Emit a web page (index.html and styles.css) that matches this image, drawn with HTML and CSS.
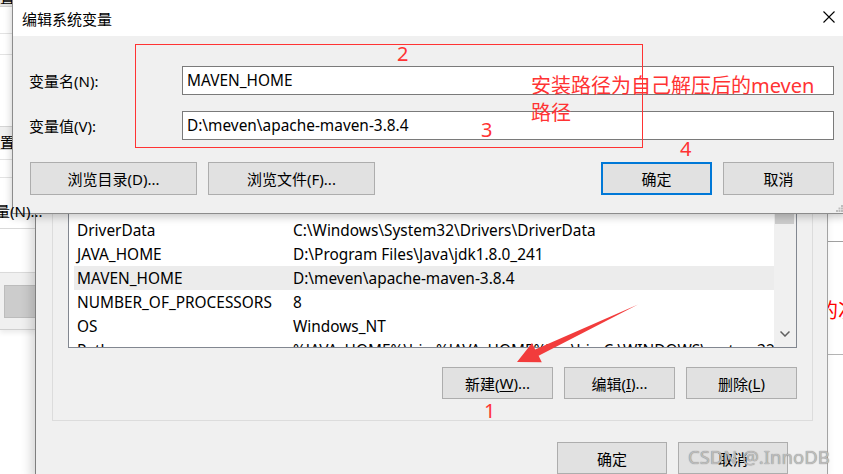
FILE: index.html
```html
<!DOCTYPE html>
<html lang="zh-CN">
<head>
<meta charset="utf-8">
<title>编辑系统变量</title>
<link rel="stylesheet" href="styles.css">
</head>
<body>
<div class="screen">

  <div class="bg-left">
    <div class="bl-head"><span>置</span></div>
    <div class="bl-l1"></div>
    <div class="bl-l2"></div>
    <div class="bl-sp1"></div>
    <div class="bl-band"><span>置</span></div>
    <div class="bl-l3"></div>
    <div class="bl-l4"></div>
    <div class="bl-sp2"></div>
    <div class="bl-sp3"></div>
    <div class="bl-toolbar"><div class="bl-btn"></div></div>
  </div>

  <div class="bg-right">
    <div class="br-top"></div>
    <div class="br-mid"><span class="br-red">的次</span></div>
  </div>

  <div class="envwin">
    <div class="group">
      <div class="list">
        <div class="rows">
          <div class="row head"></div>
          <div class="row"></div>
          <div class="row"><span class="k">DriverData</span><span class="v">C:\Windows\System32\Drivers\DriverData</span></div>
          <div class="row"><span class="k">JAVA_HOME</span><span class="v">D:\Program Files\Java\jdk1.8.0_241</span></div>
          <div class="row sel"><span class="k">MAVEN_HOME</span><span class="v">D:\meven\apache-maven-3.8.4</span></div>
          <div class="row"><span class="k">NUMBER_OF_PROCESSORS</span><span class="v">8</span></div>
          <div class="row"><span class="k">OS</span><span class="v">Windows_NT</span></div>
          <div class="row"><span class="k">Path</span><span class="v">%JAVA_HOME%\bin;%JAVA_HOME%\jre\bin;C:\WINDOWS\system32;C:\WINDOWS</span></div>
        </div>
        <div class="scroll">
          <div class="thumb"></div>
          <svg class="chev" width="10" height="6" viewBox="0 0 10 6"><polyline points="0.5,0.5 5,5 9.5,0.5" fill="none" stroke="#606060" stroke-width="1.5"/></svg>
        </div>
      </div>
      <div class="gbtns">
        <div class="btn w111">新建(<u>W</u>)...</div>
        <div class="btn w111">编辑(<u>I</u>)...</div>
        <div class="btn w111">删除(<u>L</u>)</div>
      </div>
    </div>
    <div class="wbtns">
      <div class="btn w110">确定</div>
      <div class="btn w110">取消</div>
    </div>
  </div>

  <div class="dlg">
    <div class="dlg-title">
      <span>编辑系统变量</span>
      <svg class="close" width="12" height="12" viewBox="0 0 12 12"><path d="M0.5 0.5 L11.5 11.5 M11.5 0.5 L0.5 11.5" stroke="#000" stroke-width="1.1" fill="none"/></svg>
    </div>
    <div class="dlg-body">
      <div class="field">
        <label class="lbl">变量名(N):</label>
        <div class="input">MAVEN_HOME</div>
      </div>
      <div class="field">
        <label class="lbl">变量值(V):</label>
        <div class="input">D:\meven\apache-maven-3.8.4</div>
      </div>
      <div class="dbtns">
        <div class="btn w167">浏览目录(D)...</div>
        <div class="btn w167">浏览文件(F)...</div>
        <div class="spacer"></div>
        <div class="btn w111 primary">确定</div>
        <div class="btn w111">取消</div>
      </div>
    </div>
    <svg class="grip" width="7" height="7" viewBox="0 0 7 7">
      <rect x="5" y="0" width="2" height="2" fill="#bdbdbd"/>
      <rect x="2.5" y="2.5" width="2" height="2" fill="#bdbdbd"/>
      <rect x="5" y="2.5" width="2" height="2" fill="#bdbdbd"/>
      <rect x="0" y="5" width="2" height="2" fill="#bdbdbd"/>
      <rect x="2.5" y="5" width="2" height="2" fill="#bdbdbd"/>
      <rect x="5" y="5" width="2" height="2" fill="#bdbdbd"/>
    </svg>
  </div>

  <div class="stray">量(N)...</div>

  <div class="redbox"></div>
  <div class="note">安装路径为自己解压后的meven<br>路径</div>
  <div class="num n2">2</div>
  <div class="num n3">3</div>
  <div class="num n4">4</div>
  <div class="num n1">1</div>

  <svg class="arrow" width="843" height="474" viewBox="0 0 843 474">
    <polygon points="638,304.5 538.6,355.8 541.8,362.3 517,362 532,343 535.2,349.6" fill="#f23c3c"/>
  </svg>

  <div class="wm">CSDN @.InnoDB</div>
</div>
</body>
</html>
```

FILE: styles.css
```css
body {
  margin: 0;
}

.screen {
  position: relative;
  width: 843px;
  height: 474px;
  overflow: hidden;
  background: #fff;
  font-family: "Noto Sans", "Noto Sans CJK SC", sans-serif;
  font-size: 15px;
  color: #000;
}

/* ---------- left background window ---------- */
.bg-left {
  position: absolute;
  left: 0;
  top: 0;
  width: 36px;
  height: 474px;
  background: #fff;
  display: flex;
  flex-direction: column;
  overflow: hidden;
  z-index: 1;
}
.bl-head {
  height: 6px;
  flex: none;
  background: #e6e6e6;
  border-bottom: 1px solid #cfcfcf;
  overflow: hidden;
}
.bl-head span {
  display: block;
  margin-top: -10px;
  line-height: 15px;
}
.bl-l1 { height: 26px; flex: none; border-bottom: 1px solid #e3e3e3; }
.bl-l2 { height: 20px; flex: none; border-bottom: 1px solid #e3e3e3; }
.bl-sp1 { height: 71px; flex: none; }
.bl-band {
  height: 22px;
  flex: none;
  background: #f0f0f0;
  border-top: 1px solid #d5d5d5;
  border-bottom: 1px solid #d5d5d5;
  overflow: hidden;
}
.bl-band span {
  display: block;
  padding-top: 8px;
  line-height: 15px;
}
.bl-l3 { height: 9px; flex: none; border-bottom: 1px solid #e3e3e3; }
.bl-l4 { height: 17px; flex: none; border-bottom: 1px solid #e3e3e3; }
.bl-sp2 { height: 50px; flex: none; border-bottom: 1px solid #d9d9d9; }
.bl-sp3 { height: 43px; flex: none; }
.bl-toolbar {
  height: 44px;
  flex: none;
  background: #f0f0f0;
  border-top: 1px solid #dadada;
  border-bottom: 1px solid #cfcfcf;
  padding: 12px 0 0 4px;
  box-shadow: 0 3px 5px rgba(0, 0, 0, 0.08);
}
.bl-btn {
  width: 40px;
  height: 31px;
  background: #cccccc;
  border: 1px solid #bcbcbc;
}

/* ---------- right background window ---------- */
.bg-right {
  position: absolute;
  left: 826px;
  top: 0;
  width: 17px;
  height: 474px;
  background: #fff;
  z-index: 1;
}
.br-top {
  height: 241px;
  border-bottom: 1px solid #a0a0a0;
}
.br-mid {
  height: 113px;
  border-bottom: 1px solid #b4b4b4;
  padding-top: 59px;
  box-sizing: border-box;
  white-space: nowrap;
}
.br-red {
  display: block;
  margin-left: -8px;
  font-size: 20px;
  line-height: 20px;
  color: #f00;
}

/* ---------- environment variables window ---------- */
.envwin {
  position: absolute;
  left: 35px;
  top: 100px;
  width: 793px;
  height: 380px;
  box-sizing: border-box;
  background: #f0f0f0;
  border-left: 1px solid #7f7f7f;
  border-right: 1px solid #a3a3a3;
  padding: 40px 14px 0 16px;
  box-shadow: -4px 0 10px rgba(0, 0, 0, 0.16);
  z-index: 2;
}
.group {
  border: 1px solid #dcdcdc;
  padding: 28px 15px 21px 15px;
}
.list {
  height: 179px;
  box-sizing: border-box;
  border: 1px solid #828790;
  background: #fff;
  display: flex;
  font-size: 15.4px;
}
.rows {
  flex: 1;
  overflow: hidden;
  min-width: 0;
}
.row {
  display: flex;
  height: 24px;
  align-items: center;
  margin-left: 5px;
  padding-left: 3px;
  white-space: nowrap;
}
.row.sel {
  background: #ececec;
}
.row .k {
  width: 216px;
  flex: none;
}
.scroll {
  width: 22px;
  flex: none;
  background: #f0f0f0;
  display: flex;
  flex-direction: column;
  justify-content: space-between;
  align-items: center;
}
.thumb {
  align-self: stretch;
  margin: 30px 2px 0 1px;
  height: 24px;
  background: #cdcdcd;
}
.chev {
  margin-bottom: 10px;
}

.gbtns {
  display: flex;
  justify-content: flex-end;
  gap: 11px;
  margin-top: 19px;
}
.wbtns {
  display: flex;
  justify-content: flex-end;
  gap: 11px;
  margin-top: 21px;
  padding-right: 25px;
}

.btn {
  box-sizing: border-box;
  height: 32px;
  background: #e1e1e1;
  border: 1px solid #adadad;
  display: flex;
  align-items: center;
  justify-content: center;
  white-space: nowrap;
  flex: none;
}
.btn u {
  text-decoration-thickness: 1px;
  text-underline-offset: 2px;
}
.w110 { width: 110px; }
.w111 { width: 111px; }
.w167 { width: 167px; }
.btn.primary {
  border: 2px solid #0078d7;
}

/* ---------- edit dialog ---------- */
.dlg {
  position: absolute;
  left: 12px;
  top: 0;
  width: 834px;
  height: 214px;
  box-sizing: border-box;
  background: #f0f0f0;
  border-left: 1px solid #8c8c8c;
  border-bottom: 1px solid #8c8c8c;
  box-shadow: 0 3px 8px rgba(0, 0, 0, 0.22);
  display: flex;
  flex-direction: column;
  z-index: 3;
}
.dlg-title {
  height: 36px;
  flex: none;
  background: #fff;
  display: flex;
  align-items: center;
  justify-content: space-between;
  padding: 0 11px 0 9px;
}
.close {
  display: block;
  margin-top: -2px;
}
.dlg-body {
  padding: 30px 12px 0 16px;
}
.field {
  display: flex;
  align-items: center;
}
.field + .field {
  margin-top: 16px;
}
.lbl {
  width: 153px;
  flex: none;
}
.input {
  flex: 1;
  height: 29px;
  box-sizing: border-box;
  border: 1px solid #7a7a7a;
  background: #fff;
  padding-left: 4px;
  display: flex;
  align-items: center;
  white-space: nowrap;
  font-size: 15.4px;
}
.dbtns {
  display: flex;
  gap: 11px;
  margin-top: 22px;
  padding-left: 1px;
}
.dbtns .btn {
  height: 33px;
}
.spacer {
  flex: 1;
}
.grip {
  position: absolute;
  right: 3px;
  bottom: 1px;
}

/* ---------- overlays / annotations ---------- */
.stray {
  position: absolute;
  left: -5px;
  top: 204px;
  line-height: 15px;
  z-index: 5;
}
.redbox {
  position: absolute;
  left: 135px;
  top: 44px;
  width: 508px;
  height: 104px;
  box-sizing: border-box;
  border: 1px solid #f33;
  z-index: 4;
}
.note {
  position: absolute;
  left: 531px;
  top: 72px;
  font-size: 20px;
  line-height: 27px;
  color: #f33;
  white-space: nowrap;
  z-index: 4;
}
.num {
  position: absolute;
  font-size: 20px;
  line-height: 20px;
  color: #f33;
  z-index: 4;
}
.n2 { left: 397px; top: 44px; }
.n3 { left: 481px; top: 120px; }
.n4 { left: 680px; top: 139px; }
.n1 { left: 484px; top: 401px; }

.arrow {
  position: absolute;
  left: 0;
  top: 0;
  z-index: 4;
}
.wm {
  position: absolute;
  left: 688px;
  top: 447px;
  font-size: 18.5px;
  line-height: 20px;
  color: rgba(200, 200, 200, 0.85);
  text-shadow: 0 0 1px #6e6e6e;
  white-space: nowrap;
  z-index: 6;
}
```
